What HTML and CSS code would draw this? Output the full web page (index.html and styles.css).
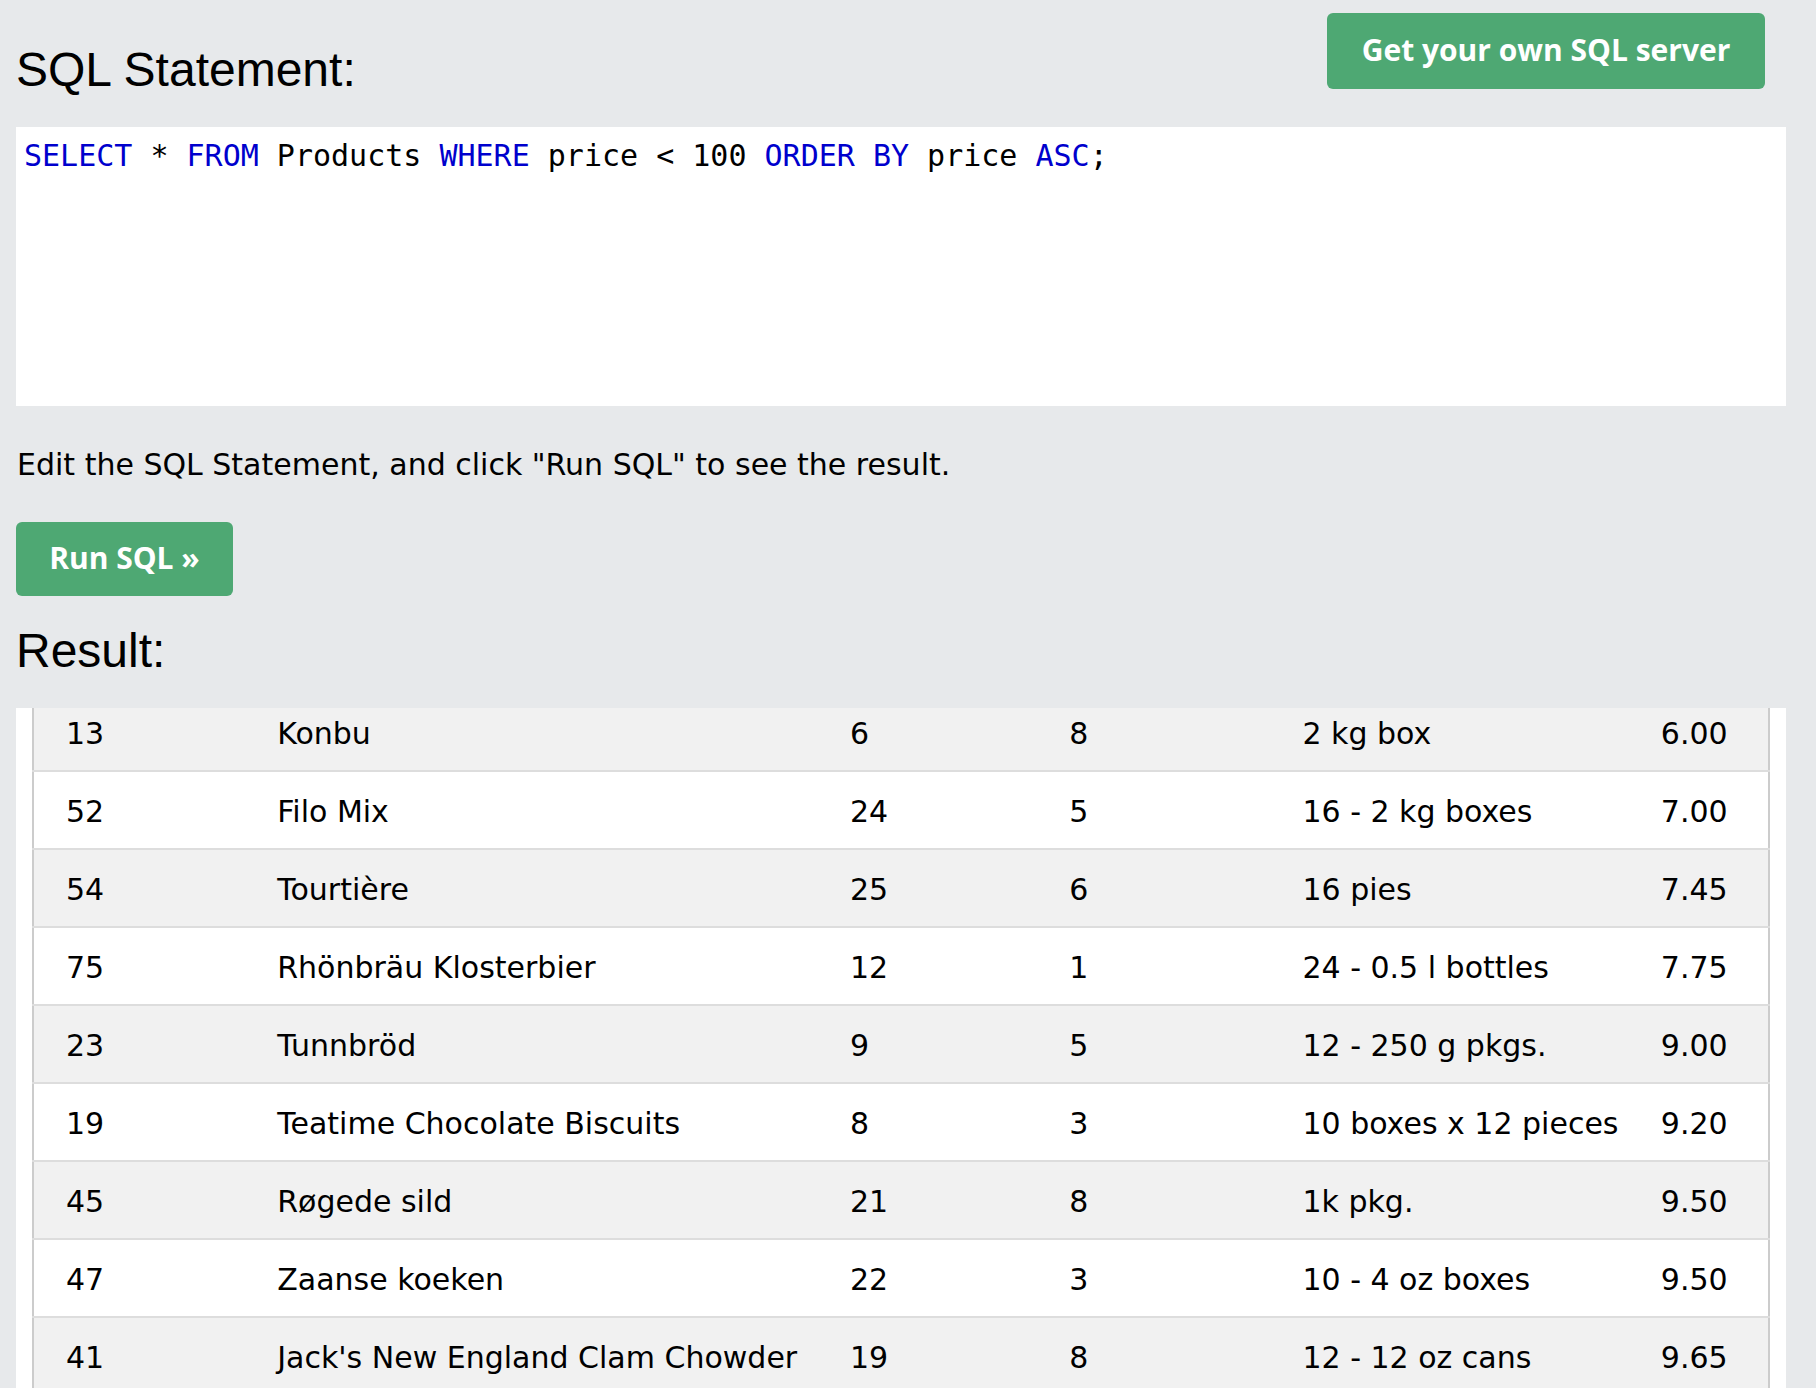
FILE: index.html
```html
<!DOCTYPE html>
<html lang="en">
<head>
<meta charset="utf-8">
<title>SQL Tryit</title>
<link rel="stylesheet" href="styles.css">
</head>
<body>
<div class="page">
  <div class="top">
    <h3 class="heading heading-sql">SQL Statement:</h3>
    <a class="btn btn-server" href="#">Get your own SQL server</a>
  </div>
  <div class="editor">
    <div class="code"><span class="kw">SELECT</span> * <span class="kw">FROM</span> Products <span class="kw">WHERE</span> price &lt; 100 <span class="kw">ORDER</span> <span class="kw">BY</span> price <span class="kw">ASC</span>;</div>
  </div>
  <p class="hint">Edit the SQL Statement, and click "Run SQL" to see the result.</p>
  <div class="run-row"><button class="btn btn-run" type="button">Run SQL »</button></div>
  <h3 class="heading heading-result">Result:</h3>
  <div class="result">
    <table class="grid">
      <colgroup>
        <col class="c1"><col class="c2"><col class="c3"><col class="c4"><col class="c5"><col class="c6">
      </colgroup>
      <tbody>
        <tr><td>13</td><td>Konbu</td><td>6</td><td>8</td><td>2 kg box</td><td>6.00</td></tr>
        <tr><td>52</td><td>Filo Mix</td><td>24</td><td>5</td><td>16 - 2 kg boxes</td><td>7.00</td></tr>
        <tr><td>54</td><td>Tourtière</td><td>25</td><td>6</td><td>16 pies</td><td>7.45</td></tr>
        <tr><td>75</td><td>Rhönbräu Klosterbier</td><td>12</td><td>1</td><td>24 - 0.5 l bottles</td><td>7.75</td></tr>
        <tr><td>23</td><td>Tunnbröd</td><td>9</td><td>5</td><td>12 - 250 g pkgs.</td><td>9.00</td></tr>
        <tr><td>19</td><td>Teatime Chocolate Biscuits</td><td>8</td><td>3</td><td>10 boxes x 12 pieces</td><td>9.20</td></tr>
        <tr><td>45</td><td>Røgede sild</td><td>21</td><td>8</td><td>1k pkg.</td><td>9.50</td></tr>
        <tr><td>47</td><td>Zaanse koeken</td><td>22</td><td>3</td><td>10 - 4 oz boxes</td><td>9.50</td></tr>
        <tr><td>41</td><td>Jack's New England Clam Chowder</td><td>19</td><td>8</td><td>12 - 12 oz cans</td><td>9.65</td></tr>
      </tbody>
    </table>
  </div>
</div>
</body>
</html>
```
FILE: styles.css
```css
html, body {
  margin: 0;
  padding: 0;
  background: #e7e9eb;
  height: 100%;
  overflow: hidden;
}

.page {
  padding: 0 30px 0 16px;
  font-family: "DejaVu Sans", Verdana, sans-serif;
  color: #000;
}

.top {
  display: flex;
  justify-content: space-between;
  align-items: flex-start;
  padding-top: 13px;
  height: 114px;
}

.heading {
  margin: 0;
  font-family: "Liberation Sans", Arial, Helvetica, sans-serif;
  font-weight: 400;
  font-size: 48px;
  line-height: 48px;
}

.heading-sql {
  margin-top: 33px;
}

.btn {
  display: inline-flex;
  align-items: center;
  justify-content: center;
  box-sizing: border-box;
  height: 74px;
  background: #4ea873;
  color: #fff;
  border: none;
  border-radius: 6px;
  font-family: "Open Sans", "Source Sans Pro", sans-serif;
  font-weight: 700;
  font-size: 30px;
  text-decoration: none;
  padding: 0 0 4px;
}

.btn-server {
  width: 438px;
  height: 76px;
  margin-right: 21px;
}

.editor {
  background: #fff;
  height: 279px;
  box-sizing: border-box;
  padding: 11px 8px;
}

.code {
  font-family: "DejaVu Sans Mono", Menlo, monospace;
  font-size: 30px;
  line-height: 36px;
  white-space: pre;
}

.kw {
  color: #0000cd;
}

.hint {
  margin: 38px 0 0;
  font-size: 30px;
  line-height: 42px;
  padding-left: 1px;
}

.run-row {
  margin-top: 36px;
}

.btn-run {
  width: 217px;
}

.heading-result {
  margin-top: 31px;
}

.result {
  margin-top: 33px;
  background: #fff;
  height: 680px;
  overflow: hidden;
  padding: 0 16px;
}

.grid {
  width: 100%;
  table-layout: fixed;
  border-collapse: collapse;
  border-left: 2px solid #ccc;
  border-right: 2px solid #ccc;
  margin-top: -14px;
  font-size: 30px;
}

.grid col.c1 { width: 228px; }
.grid col.c2 { width: 572px; }
.grid col.c3 { width: 219px; }
.grid col.c4 { width: 233px; }
.grid col.c5 { width: 358px; }
.grid col.c6 { width: 124px; }

.grid td {
  padding: 20px 0 16px 16px;
  line-height: 40px;
  border-bottom: 2px solid #ddd;
  white-space: nowrap;
}

.grid td:first-child {
  padding-left: 32px;
}

.grid tr:nth-child(odd) {
  background: #f1f1f1;
}

.grid tr:nth-child(even) {
  background: #fff;
}
```
